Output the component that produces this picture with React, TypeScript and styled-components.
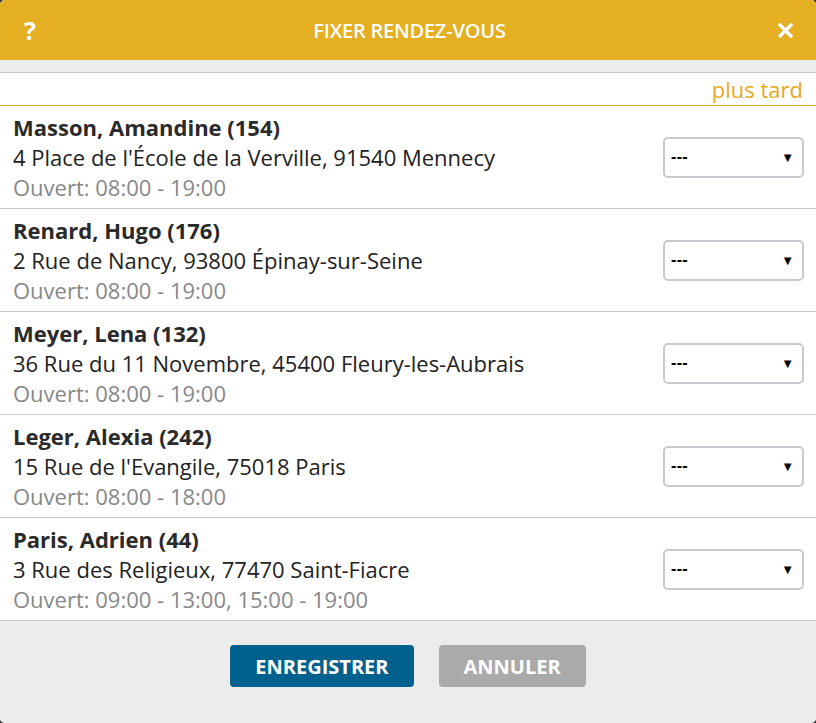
import styled, { createGlobalStyle } from "styled-components";

const GlobalStyle = createGlobalStyle`
  html, body {
    margin: 0;
    padding: 0;
    background: #3a3a3a;
  }
  body {
    font-family: "Open Sans", "Liberation Sans", sans-serif;
  }
`;

const Dialog = styled.div`
  width: 816px;
  height: 723px;
  display: flex;
  flex-direction: column;
  background: #ffffff;
  border-radius: 5px;
  overflow: hidden;
`;

const Header = styled.div`
  height: 60px;
  flex: none;
  display: flex;
  align-items: center;
  justify-content: space-between;
  padding: 0 21px 0 24px;
  background: #e5af22;
  color: #ffffff;
`;

const HeaderIcon = styled.span`
  width: 18px;
  font-size: 25px;
  font-weight: 700;
  line-height: 1;
  display: flex;
  align-items: center;
`;

const Title = styled.h1`
  margin: 0;
  font-size: 20px;
  font-weight: 600;
  letter-spacing: -0.2px;
  text-transform: uppercase;
`;

const Strip = styled.div`
  height: 12px;
  flex: none;
  background: #ececec;
  border-bottom: 1px solid #c8c8c8;
`;

const LaterRow = styled.div`
  height: 32px;
  flex: none;
  display: flex;
  align-items: center;
  justify-content: flex-end;
  padding-right: 13px;
  border-bottom: 1px solid #e5af22;
  color: #e8a922;
  font-size: 22px;
`;

const List = styled.div`
  flex: 1;
  display: flex;
  flex-direction: column;
`;

const Row = styled.div`
  height: 102px;
  flex: none;
  display: flex;
  align-items: center;
  justify-content: space-between;
  padding: 0 12px 0 13px;
  border-bottom: 1px solid #c8c8c8;
`;

const Info = styled.div`
  display: flex;
  flex-direction: column;
  font-size: 22px;
  line-height: 30px;
  color: #222222;
`;

const Name = styled.div`
  font-weight: 700;
  color: #2a2a2a;
`;

const Hours = styled.div`
  color: #888888;
`;

const Select = styled.div`
  width: 137px;
  height: 37px;
  box-sizing: content-box;
  border: 2px solid #c8cacd;
  border-radius: 5px;
  display: flex;
  align-items: center;
  justify-content: space-between;
  background: #ffffff;
  font-family: "Liberation Sans", Arial, sans-serif;
  font-size: 16px;
  color: #000000;
`;

const SelectValue = styled.span`
  padding-left: 6px;
  font-weight: 700;
  letter-spacing: 0.3px;
`;

const Arrow = styled.span`
  padding-right: 8px;
  font-size: 13px;
`;

const Footer = styled.div`
  flex: 1;
  display: flex;
  justify-content: center;
  align-items: flex-start;
  gap: 25px;
  padding-top: 24px;
  background: #ececec;
`;

const Button = styled.button<{ $primary?: boolean }>`
  height: 42px;
  padding: 0 25px;
  border: none;
  border-radius: 4px;
  background: ${(p) => (p.$primary ? "#00618e" : "#aaaaaa")};
  color: #ffffff;
  font-family: "Open Sans", "Liberation Sans", sans-serif;
  font-size: 20px;
  font-weight: 700;
  text-transform: uppercase;
  cursor: pointer;
`;

const contacts = [
  { name: "Masson, Amandine (154)", address: "4 Place de l'École de la Verville, 91540 Mennecy", hours: "Ouvert: 08:00 - 19:00" },
  { name: "Renard, Hugo (176)", address: "2 Rue de Nancy, 93800 Épinay-sur-Seine", hours: "Ouvert: 08:00 - 19:00" },
  { name: "Meyer, Lena (132)", address: "36 Rue du 11 Novembre, 45400 Fleury-les-Aubrais", hours: "Ouvert: 08:00 - 19:00" },
  { name: "Leger, Alexia (242)", address: "15 Rue de l'Evangile, 75018 Paris", hours: "Ouvert: 08:00 - 18:00" },
  { name: "Paris, Adrien (44)", address: "3 Rue des Religieux, 77470 Saint-Fiacre", hours: "Ouvert: 09:00 - 13:00, 15:00 - 19:00" },
];

const App = () => {
  return (
    <>
      <GlobalStyle />
      <Dialog>
        <Header>
          <HeaderIcon>?</HeaderIcon>
          <Title>Fixer rendez-vous</Title>
          <HeaderIcon>
            <svg width="17" height="17" viewBox="0 0 17 17">
              <path d="M2 2 L15 15 M15 2 L2 15" stroke="#fff" strokeWidth="3.4" />
            </svg>
          </HeaderIcon>
        </Header>
        <Strip />
        <LaterRow>plus tard</LaterRow>
        <List>
          {contacts.map((c) => (
            <Row key={c.name}>
              <Info>
                <Name>{c.name}</Name>
                <div>{c.address}</div>
                <Hours>{c.hours}</Hours>
              </Info>
              <Select>
                <SelectValue>---</SelectValue>
                <Arrow>▼</Arrow>
              </Select>
            </Row>
          ))}
        </List>
        <Footer>
          <Button $primary>Enregistrer</Button>
          <Button>Annuler</Button>
        </Footer>
      </Dialog>
    </>
  );
};

export default App;
